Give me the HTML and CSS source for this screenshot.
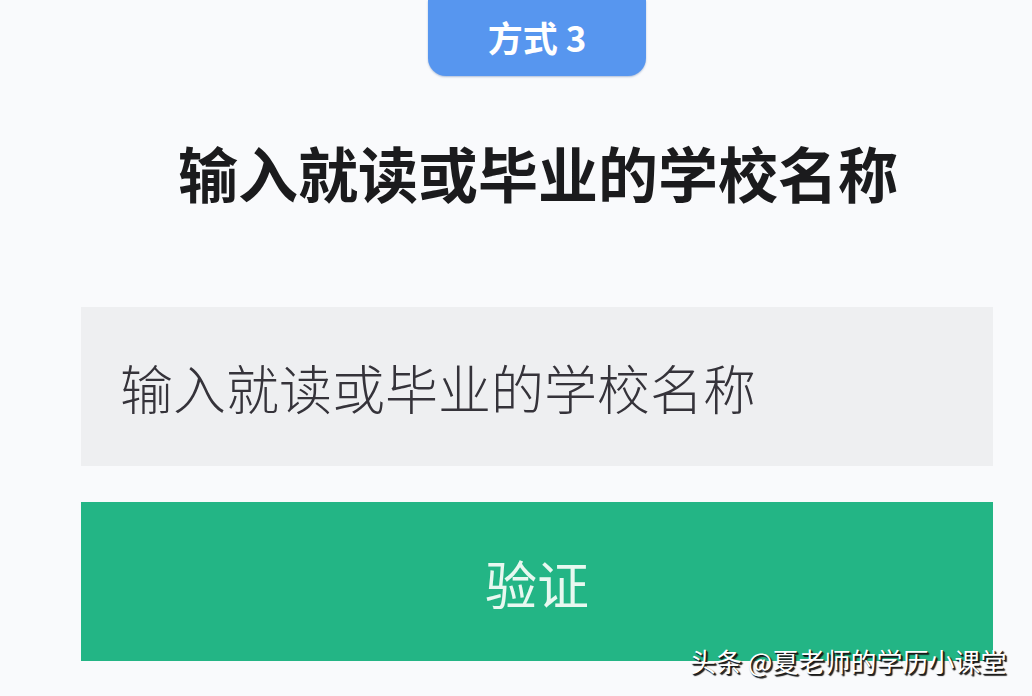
FILE: index.html
```html
<!DOCTYPE html>
<html lang="zh">
<head>
<meta charset="utf-8">
<link rel="stylesheet" href="styles.css">
</head>
<body>
<div class="page">
  <div class="tab">方式 3</div>
  <h1 class="title">输入就读或毕业的学校名称</h1>
  <div class="field">输入就读或毕业的学校名称</div>
  <div class="btn">验证</div>
  <div class="mark">头条 @夏老师的学历小课堂</div>
</div>
</body>
</html>
```
FILE: styles.css
```css
html, body {
  margin: 0;
  padding: 0;
  background: #f9fafc;
}
.page {
  position: relative;
  width: 1032px;
  height: 696px;
  overflow: hidden;
  display: flex;
  flex-direction: column;
  font-family: "Noto Sans CJK SC", "Noto Sans", sans-serif;
}
.tab {
  margin-left: 428px;
  width: 218px;
  height: 76px;
  background: #5796ef;
  border-radius: 0 0 18px 18px;
  color: #ffffff;
  font-size: 35px;
  font-weight: 700;
  display: flex;
  align-items: center;
  justify-content: center;
  padding-bottom: 4px;
  box-sizing: border-box;
  box-shadow: 0 1px 2px rgba(40, 80, 150, 0.35);
}
.title {
  margin: 56px 0 0 178px;
  height: 80px;
  line-height: 80px;
  font-size: 60px;
  font-weight: 700;
  color: #1b1b1d;
  letter-spacing: 0;
}
.field {
  margin: 95px 0 0 81px;
  width: 912px;
  height: 159px;
  box-sizing: border-box;
  padding-left: 39px;
  background: #eeeff1;
  display: flex;
  align-items: center;
  font-size: 53px;
  font-weight: 300;
  color: #35333a;
  line-height: 1;
  padding-top: 2px;
}
.btn {
  margin: 36px 0 0 81px;
  width: 912px;
  height: 159px;
  background: #23b585;
  display: flex;
  align-items: center;
  justify-content: center;
  font-size: 52px;
  color: #e8f8f0;
  line-height: 1;
  padding-top: 2px;
  box-sizing: border-box;
}
.mark {
  position: absolute;
  left: 690px;
  top: 643px;
  font-size: 26px;
  line-height: 36px;
  color: #ffffff;
  text-shadow: 2px 2px 1px #1a1a1a, 1px 1px 1px #000;
  white-space: nowrap;
}
```
